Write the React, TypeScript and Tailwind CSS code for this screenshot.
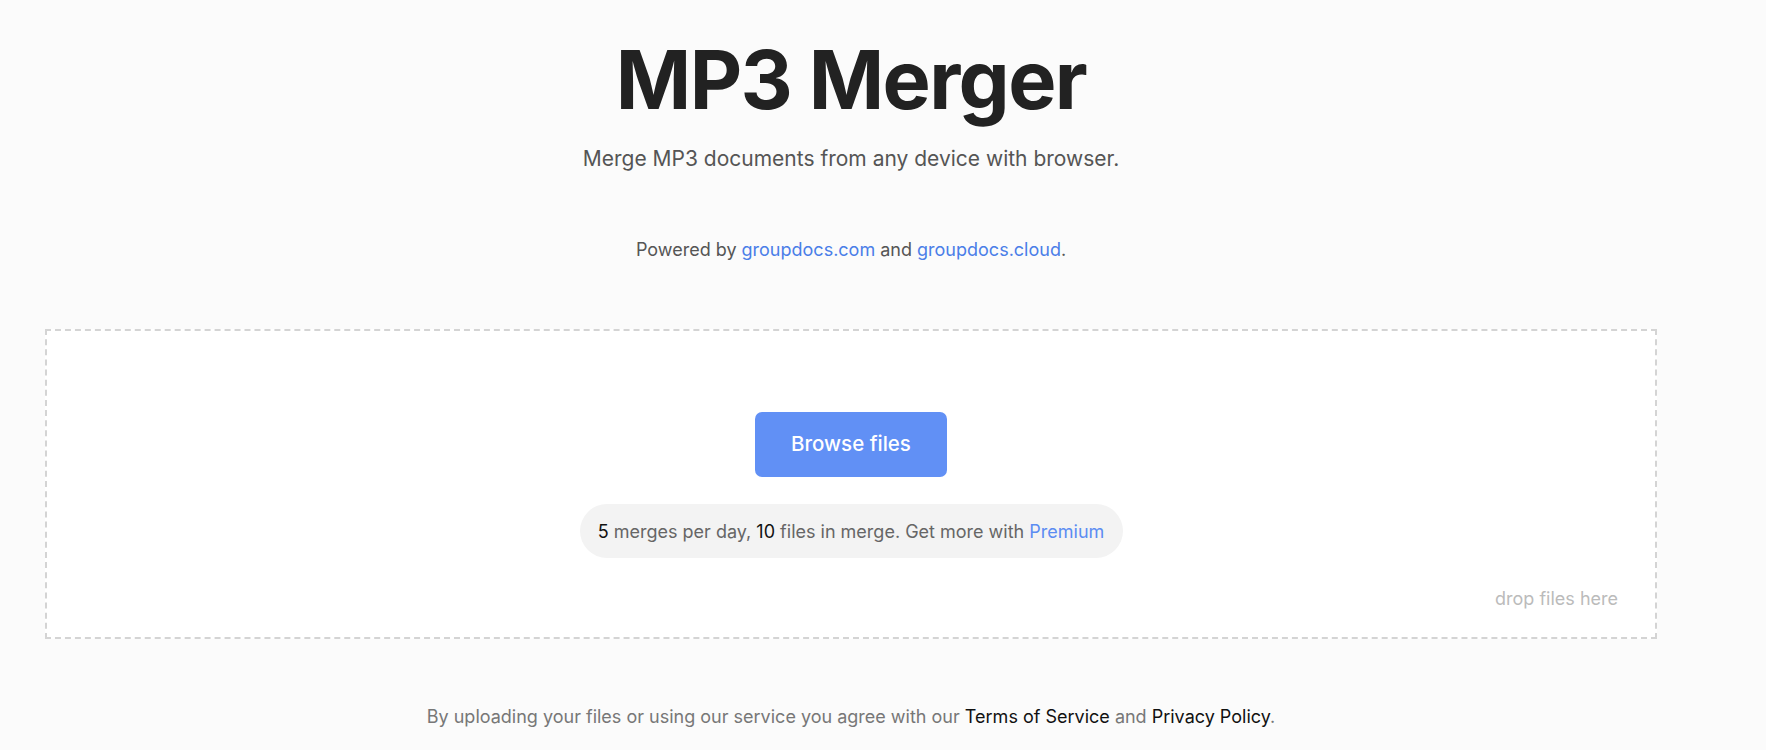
export default function App() {
  return (
    <div className="min-h-[750px] bg-[#fbfbfb] font-['Inter','Noto_Sans',sans-serif]">
      <div className="w-[1702px] px-[45px] flex flex-col items-center">
        <h1 className="mt-[30px] text-[81px] leading-[100px] font-bold tracking-[-0.02em] text-[#222]">
          MP3 Merger
        </h1>
        <p className="mt-[15px] text-[21px] leading-[28px] text-[#555]">
          Merge MP3 documents from any device with browser.
        </p>
        <p className="mt-[64px] text-[18px] leading-[26px] text-[#555]">
          Powered by <a className="text-[#4a7ee8]">groupdocs.com</a> and{' '}
          <a className="text-[#4a7ee8]">groupdocs.cloud</a>.
        </p>

        {/* drop zone */}
        <div className="mt-[66px] w-full h-[310px] bg-white border-2 border-dashed border-[#d4d4d4] flex flex-col items-center">
          <button className="mt-[81px] w-[192px] h-[65px] rounded-[7px] bg-[#6190f5] text-white text-[20.5px] font-medium">
            Browse files
          </button>
          <div className="mt-[27px] h-[54px] w-[543px] rounded-full bg-[#f3f3f3] flex items-center justify-center text-[18px] text-[#666]">
            <span className="text-[#111]">5</span>&nbsp;merges per day,&nbsp;
            <span className="text-[#111]">10</span>&nbsp;files in merge. Get more with&nbsp;
            <a className="text-[#5b8cf2]">Premium</a>
          </div>
          <div className="mt-[27px] self-end mr-[37px] text-[18px] text-[#bbb]">drop files here</div>
        </div>

        <p className="mt-[65px] text-[18px] leading-[26px] text-[#777]">
          By uploading your files or using our service you agree with our{' '}
          <a className="text-[#111]">Terms of Service</a> and{' '}
          <a className="text-[#111]">Privacy Policy</a>.
        </p>
      </div>
    </div>
  );
}
